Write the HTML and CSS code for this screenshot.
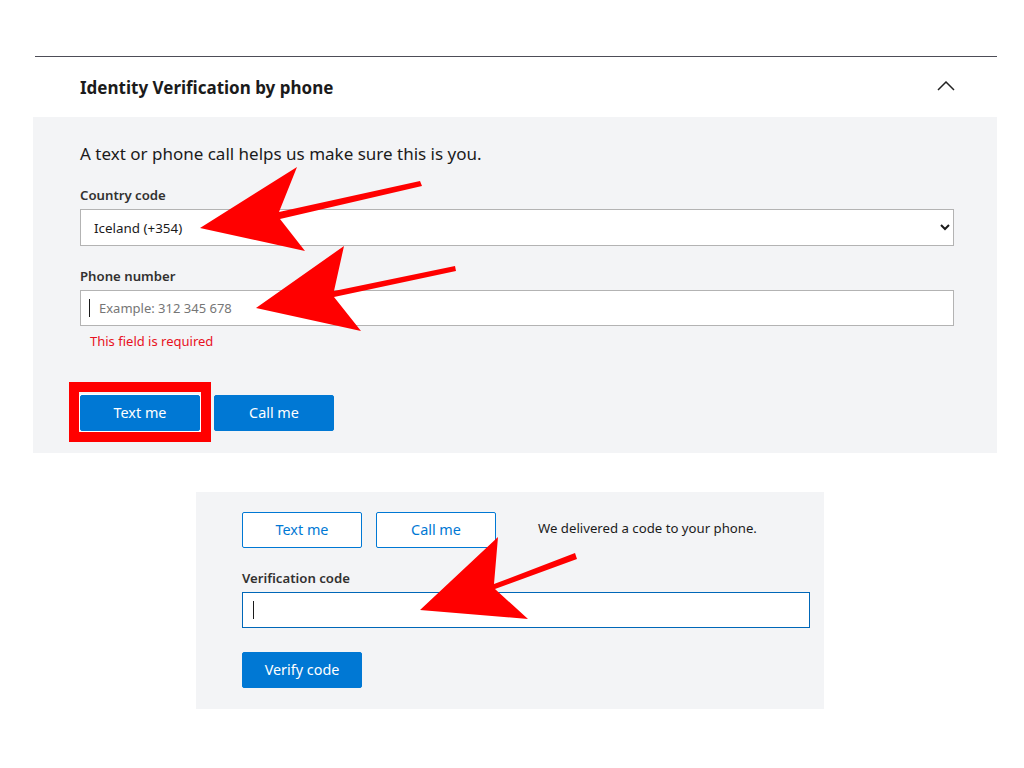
FILE: index.html
```html
<!DOCTYPE html>
<html lang="en">

<head>
    <meta charset="UTF-8">
    <meta name="viewport" content="width=device-width, initial-scale=1.0">
    <title>Identity Verification by phone</title>
    <link rel="stylesheet" href="styles.css">
</head>

<body>
    <div class="rule"></div>

    <section class="section">
        <div class="section-head">
            <h2>Identity Verification by phone</h2>
            <svg class="chevron" width="18" height="10" viewBox="0 0 18 10">
                <path d="M1 9 L9 1 L17 9" fill="none" stroke="#222" stroke-width="1.5" />
            </svg>
        </div>

        <div class="panel">
            <p class="intro">A text or phone call helps us make sure this is you.</p>

            <label class="field-label" for="country">Country code</label>
            <select class="select" id="country">
                <option>Iceland (+354)</option>
            </select>

            <label class="field-label" for="phone">Phone number</label>
            <div class="input-wrap">
                <input class="input" id="phone" type="text" placeholder="Example: 312 345 678">
                <span class="caret"></span>
            </div>
            <div class="error">This field is required</div>

            <div class="actions">
                <button class="btn btn-primary btn-focus">Text me</button>
                <button class="btn btn-primary">Call me</button>
            </div>
        </div>
    </section>

    <section class="verify">
        <div class="verify-row">
            <button class="btn btn-outline">Text me</button>
            <button class="btn btn-outline">Call me</button>
            <span class="delivered">We delivered a code to your phone.</span>
        </div>

        <label class="field-label" for="code">Verification code</label>
        <div class="input-wrap">
            <input class="input input-active" id="code" type="text">
            <span class="caret caret-code"></span>
        </div>

        <div class="actions-verify">
            <button class="btn btn-primary">Verify code</button>
        </div>
    </section>

    <!-- red annotations drawn over the screenshot -->
    <svg class="marks" width="1024" height="768" viewBox="0 0 1024 768">
        <rect x="74" y="387" width="132" height="50" fill="none" stroke="#ff0000" stroke-width="10" />
        <polygon fill="#ff0000"
            points="200,228 297,167 279,212 420,181 422,186 280,219 305,251" />
        <polygon fill="#ff0000"
            points="256,308 344,246 334,291 455,266 456,271 334,297 361,331" />
        <polygon fill="#ff0000"
            points="420,610 498,537 494,584 575,553 577,559 495,589 528,619" />
    </svg>
</body>

</html>
```

FILE: styles.css
```css
* {
    margin: 0;
    padding: 0;
    box-sizing: border-box;
}

body {
    background: #fff;
    font-family: "Noto Sans", "Open Sans", sans-serif;
    color: #1b1b1b;
    position: relative;
    min-height: 768px;
}

/* top divider */
.rule {
    height: 1px;
    background: #4d4d57;
    margin: 56px 27px 0 35px;
}

.section {
    margin: 0 27px 0 33px;
}

.section-head {
    height: 60px;
    display: flex;
    align-items: center;
    justify-content: space-between;
    padding: 0 42px 0 47px;
}

.section-head h2 {
    font-size: 17px;
    font-weight: 700;
    color: #1b1b1b;
}

.chevron {
    display: block;
    margin-bottom: 2px;
}

/* grey form panel */
.panel {
    background: #f3f4f6;
    padding: 25px 43px 22px 47px;
    display: flex;
    flex-direction: column;
}

.intro {
    font-size: 17px;
    line-height: 24px;
    margin-bottom: 19px;
}

.field-label {
    display: block;
    font-size: 13.2px;
    font-weight: 600;
    line-height: 20px;
    color: #323130;
    margin-bottom: 4px;
}

.select {
    height: 37px;
    width: 100%;
    border: 1px solid #b3b3b3;
    border-radius: 0;
    background: #fff;
    font-family: inherit;
    font-size: 13.4px;
    color: #1b1b1b;
    padding: 0 8px 0 9px;
    margin-bottom: 20px;
}

.input-wrap {
    position: relative;
}

.input {
    display: block;
    width: 100%;
    height: 36px;
    border: 1px solid #b3b3b3;
    background: #fff;
    font-family: inherit;
    font-size: 13px;
    padding: 0 0 0 18px;
    outline: none;
}

.input::placeholder {
    color: #767676;
}

.input-active {
    border-color: #0067b8;
}

/* blinking text cursor, frozen */
.caret {
    position: absolute;
    left: 9px;
    top: 9px;
    width: 1px;
    height: 18px;
    background: #1b1b1b;
}

.caret-code {
    left: 11px;
}

.error {
    font-size: 13px;
    line-height: 18px;
    color: #e81123;
    padding-left: 10px;
    margin-top: 6px;
}

.actions {
    display: flex;
    gap: 14px;
    margin-top: 45px;
}

.btn {
    width: 120px;
    height: 36px;
    border-radius: 2px;
    font-family: inherit;
    font-size: 14.4px;
    padding-bottom: 2px;
    cursor: pointer;
}

.btn-primary {
    background: #0078d4;
    border: 1px solid #0078d4;
    color: #fff;
}

.btn-focus {
    box-shadow: 0 0 0 1px #fff;
}

.btn-outline {
    background: #fff;
    border: 1px solid #0078d4;
    color: #0078d4;
}

/* second screenshot: code sent */
.verify {
    width: 628px;
    margin: 39px 0 0 196px;
    background: #f3f4f6;
    padding: 20px 14px 21px 46px;
}

.verify-row {
    display: flex;
    align-items: center;
    gap: 14px;
    margin-bottom: 20px;
}

.delivered {
    font-size: 13.2px;
    margin-left: 28px;
    margin-bottom: 4px;
}

.actions-verify {
    margin-top: 24px;
}

.marks {
    position: absolute;
    left: 0;
    top: 0;
    pointer-events: none;
}
```
